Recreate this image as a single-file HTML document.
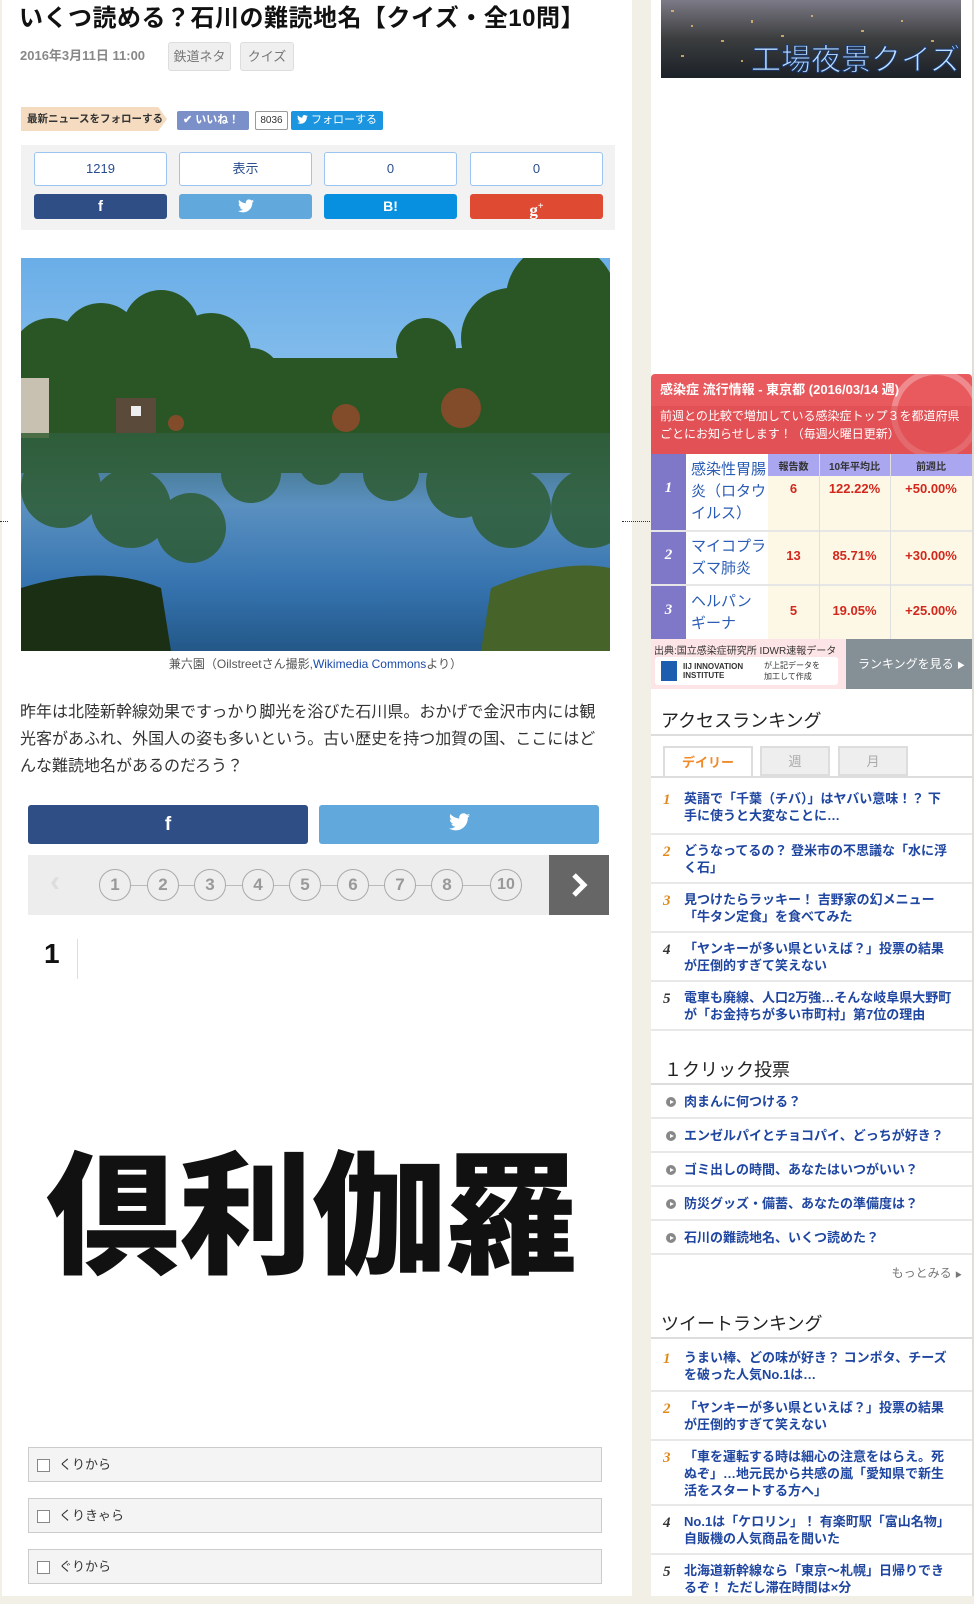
<!DOCTYPE html>
<html><head><meta charset="utf-8">
<style>
*{margin:0;padding:0;box-sizing:border-box}
body{width:974px;height:1596px;overflow:hidden;background:#f2f0e6;font-family:"Liberation Sans","Noto Sans CJK JP",sans-serif;position:relative}
.main{position:absolute;left:2px;top:0;width:630px;height:1596px;background:#fff}
.side{position:absolute;left:651px;top:0;width:321px;height:1596px;background:#fff}
.abs{position:absolute}
h1{position:absolute;left:19px;top:-2px;font-size:24px;font-weight:bold;color:#111;letter-spacing:0.5px;white-space:nowrap}
.tag{position:absolute;top:42px;height:29px;border:1px solid #ddd;background:#efefef;border-radius:3px;font-size:13px;color:#777;line-height:27px;text-align:center}
.cnt{position:absolute;top:152px;width:133px;height:34px;border:1px solid #9cc4f0;border-radius:3px;background:#fff;text-align:center;line-height:32px;font-size:13px;color:#2a4d8f}
.btn{position:absolute;top:194px;width:133px;height:25px;border-radius:3px;color:#fff;text-align:center;font-weight:bold;line-height:25px;font-size:15px}
.circ{position:absolute;top:869px;width:32px;height:32px;border:1.5px solid #aaa;border-radius:50%;background:#eee;text-align:center;line-height:29px;font-size:17px;font-weight:bold;color:#999;font-family:"Liberation Sans Narrow","Liberation Sans",sans-serif}
.opt{position:absolute;left:28px;width:574px;height:35px;border:1px solid #ccc;background:#f4f4f4;font-size:13px;color:#333;line-height:33px;padding-left:30px}
.opt:before{content:"";position:absolute;left:8px;top:11px;width:11px;height:11px;border:1px solid #888;background:#fff}
.st{position:absolute;left:10px;font-size:18px;color:#222}
.hl{position:absolute;left:0;width:321px;height:2px;background:#ddd}
.li{position:absolute;left:0;width:321px;border-bottom:2px solid #e8e8e8;font-size:13px;font-weight:bold;color:#1f46a0;line-height:17px;padding-left:33px;padding-right:22px}
.li i{position:absolute;left:12px;font-size:15px;font-weight:bold;font-family:"Liberation Serif",serif;font-style:italic;color:#e08a1c}
.li i.k{color:#333}
.vote{position:absolute;left:0;width:321px;border-bottom:2px solid #e8e8e8;height:34px;line-height:33px;font-size:13px;font-weight:bold;color:#1f46a0;padding-left:33px}
.vote:before{content:"";position:absolute;left:15px;top:12px;width:10px;height:10px;border-radius:50%;background:#888}
.vote:after{content:"";position:absolute;left:19px;top:14.5px;border-left:4px solid #fff;border-top:2.5px solid transparent;border-bottom:2.5px solid transparent}
</style></head><body>
<div class="main"></div>
<div class="abs" style="left:0;top:521px;width:8px;border-top:1px dotted #333"></div>
<div class="abs" style="left:622px;top:521px;width:30px;border-top:1px dotted #333"></div>

<h1>いくつ読める？石川の難読地名【クイズ・全10問】</h1>
<div class="abs" style="left:20px;top:45px;font-size:13px;font-weight:bold;color:#888">2016年3月11日 11:00</div>
<div class="tag" style="left:168px;width:63px">鉄道ネタ</div>
<div class="tag" style="left:240px;width:54px">クイズ</div>

<div class="abs" style="left:21px;top:107px;width:146px;height:24px;background:#f5dcc1;font-size:10.5px;font-weight:bold;line-height:24px;padding-left:6px;color:#333;clip-path:polygon(0 0,94% 0,100% 50%,94% 100%,0 100%)">最新ニュースをフォローする</div>
<div class="abs" style="left:177px;top:111px;width:72px;height:19px;background:#7b8fc8;border-radius:2px;color:#fff;font-size:11px;font-weight:bold;line-height:19px;padding-left:6px">✔ いいね！</div>
<div class="abs" style="left:255px;top:111px;width:33px;height:19px;border:1px solid #999;border-radius:2px;font-size:10px;line-height:17px;text-align:center;color:#333">8036</div>
<div class="abs" style="left:291px;top:111px;width:92px;height:19px;background:#1b95e0;border-radius:2px;color:#fff;font-size:11px;line-height:19px;padding-left:6px"><svg width="11" height="9" viewBox="0 0 24 20" style="vertical-align:-1px"><path fill="#fff" d="M24 2.4c-.9.4-1.8.7-2.8.8 1-.6 1.8-1.6 2.2-2.7-1 .6-2 1-3.1 1.2C19.3.7 18 0 16.6 0c-2.7 0-4.9 2.2-4.9 4.9 0 .4 0 .8.1 1.1C7.7 5.8 4.1 3.9 1.7.9c-.4.7-.7 1.6-.7 2.5 0 1.7.9 3.2 2.2 4.1-.8 0-1.6-.2-2.2-.6v.1c0 2.4 1.7 4.4 3.9 4.8-.4.1-.8.2-1.3.2-.3 0-.6 0-.9-.1.6 2 2.4 3.4 4.6 3.4-1.7 1.3-3.8 2.1-6.1 2.1-.4 0-.8 0-1.2-.1 2.2 1.4 4.8 2.2 7.5 2.2 9.1 0 14-7.5 14-14v-.6c1-.7 1.8-1.6 2.5-2.5z"/></svg> フォローする</div>

<div class="abs" style="left:21px;top:145px;width:594px;height:85px;background:#f2f2f2"></div>
<div class="cnt" style="left:34px">1219</div>
<div class="cnt" style="left:179px">表示</div>
<div class="cnt" style="left:324px">0</div>
<div class="cnt" style="left:470px">0</div>
<div class="btn" style="left:34px;background:#2e4e85">f</div>
<div class="btn" style="left:179px;background:#61a8dc"><svg width="16" height="14" viewBox="0 0 24 20" style="vertical-align:-2px"><path fill="#fff" d="M24 2.4c-.9.4-1.8.7-2.8.8 1-.6 1.8-1.6 2.2-2.7-1 .6-2 1-3.1 1.2C19.3.7 18 0 16.6 0c-2.7 0-4.9 2.2-4.9 4.9 0 .4 0 .8.1 1.1C7.7 5.8 4.1 3.9 1.7.9c-.4.7-.7 1.6-.7 2.5 0 1.7.9 3.2 2.2 4.1-.8 0-1.6-.2-2.2-.6v.1c0 2.4 1.7 4.4 3.9 4.8-.4.1-.8.2-1.3.2-.3 0-.6 0-.9-.1.6 2 2.4 3.4 4.6 3.4-1.7 1.3-3.8 2.1-6.1 2.1-.4 0-.8 0-1.2-.1 2.2 1.4 4.8 2.2 7.5 2.2 9.1 0 14-7.5 14-14v-.6c1-.7 1.8-1.6 2.5-2.5z"/></svg></div>
<div class="btn" style="left:324px;background:#0890e0;font-size:14px">B!</div>
<div class="btn" style="left:470px;background:#df4a32;font-family:'Liberation Serif',serif;font-size:17px">g<sup style="font-size:10px">+</sup></div>

<svg class="abs" style="left:21px;top:258px" width="589" height="393" viewBox="0 0 589 393">
<defs><linearGradient id="sky" x1="0" y1="0" x2="0" y2="1"><stop offset="0" stop-color="#6aaee8"/><stop offset="1" stop-color="#c4e0f4"/></linearGradient>
<linearGradient id="wat" x1="0" y1="0" x2="0" y2="1"><stop offset="0" stop-color="#3a6a70"/><stop offset=".35" stop-color="#5a90c0"/><stop offset=".7" stop-color="#3674b0"/><stop offset="1" stop-color="#235888"/></linearGradient></defs>
<rect width="589" height="393" fill="url(#sky)"/>
<rect y="170" width="589" height="223" fill="url(#wat)"/>
<g fill="#2a5626">
<circle cx="30" cy="100" r="40"/><circle cx="80" cy="85" r="40"/><circle cx="140" cy="70" r="38"/><circle cx="190" cy="95" r="40"/><circle cx="230" cy="120" r="30"/><circle cx="260" cy="140" r="20"/><circle cx="290" cy="150" r="15"/>
<circle cx="330" cy="150" r="22"/><circle cx="370" cy="130" r="28"/><circle cx="405" cy="90" r="30"/><circle cx="440" cy="125" r="35"/><circle cx="490" cy="80" r="50"/><circle cx="540" cy="40" r="55"/><circle cx="580" cy="110" r="60"/>
<rect x="0" y="100" width="589" height="75"/></g>
<g fill="#a04a2c" opacity=".75"><circle cx="325" cy="160" r="14"/><circle cx="440" cy="150" r="20"/><circle cx="155" cy="165" r="8"/></g>
<rect x="0" y="120" width="28" height="60" fill="#c8c0b0"/><rect x="95" y="140" width="40" height="35" fill="#5a4a3a"/><rect x="110" y="148" width="10" height="10" fill="#eee"/>
<g fill="#2c5a2c" opacity=".8">
<circle cx="40" cy="230" r="40"/><circle cx="110" cy="250" r="40"/><circle cx="170" cy="270" r="35"/><circle cx="230" cy="215" r="30"/><circle cx="300" cy="205" r="22"/><circle cx="370" cy="215" r="28"/><circle cx="440" cy="225" r="35"/><circle cx="490" cy="250" r="40"/><circle cx="570" cy="250" r="40"/>
<rect x="0" y="175" width="589" height="40"/></g>
<path d="M0 330 Q80 305 140 330 L150 393 0 393Z" fill="#1b2f14"/>
<path d="M470 330 Q540 300 589 310 L589 393 460 393Z" fill="#46632a"/>
</svg>
<div class="abs" style="left:21px;top:655px;width:589px;text-align:center;font-size:12px;color:#555">兼六園（Oilstreetさん撮影,<span style="color:#1a4ba8">Wikimedia Commons</span>より）</div>

<div class="abs" style="left:20px;top:699px;width:582px;font-size:16px;line-height:27px;color:#333">昨年は北陸新幹線効果ですっかり脚光を浴びた石川県。おかげで金沢市内には観光客があふれ、外国人の姿も多いという。古い歴史を持つ加賀の国、ここにはどんな難読地名があるのだろう？</div>

<div class="abs" style="left:28px;top:805px;width:280px;height:39px;background:#2e4e85;border-radius:3px;color:#fff;text-align:center;line-height:39px;font-weight:bold;font-size:19px">f</div>
<div class="abs" style="left:319px;top:805px;width:280px;height:39px;background:#61a8dc;border-radius:3px;text-align:center;line-height:44px"><svg width="21" height="18" viewBox="0 0 24 20"><path fill="#fff" d="M24 2.4c-.9.4-1.8.7-2.8.8 1-.6 1.8-1.6 2.2-2.7-1 .6-2 1-3.1 1.2C19.3.7 18 0 16.6 0c-2.7 0-4.9 2.2-4.9 4.9 0 .4 0 .8.1 1.1C7.7 5.8 4.1 3.9 1.7.9c-.4.7-.7 1.6-.7 2.5 0 1.7.9 3.2 2.2 4.1-.8 0-1.6-.2-2.2-.6v.1c0 2.4 1.7 4.4 3.9 4.8-.4.1-.8.2-1.3.2-.3 0-.6 0-.9-.1.6 2 2.4 3.4 4.6 3.4-1.7 1.3-3.8 2.1-6.1 2.1-.4 0-.8 0-1.2-.1 2.2 1.4 4.8 2.2 7.5 2.2 9.1 0 14-7.5 14-14v-.6c1-.7 1.8-1.6 2.5-2.5z"/></svg></div>

<div class="abs" style="left:28px;top:855px;width:575px;height:60px;background:#ededed"></div>
<div class="abs" style="left:115px;top:885px;width:400px;height:1px;background:#bbb"></div>
<div class="abs" style="left:50px;top:865px;font-size:30px;color:#ddd;font-weight:bold">‹</div>
<div class="circ" style="left:99px">1</div><div class="circ" style="left:147px">2</div><div class="circ" style="left:194px">3</div><div class="circ" style="left:242px">4</div><div class="circ" style="left:289px">5</div><div class="circ" style="left:337px">6</div><div class="circ" style="left:384px">7</div><div class="circ" style="left:431px">8</div><div class="circ" style="left:490px;font-size:16px">10</div>
<div class="abs" style="left:549px;top:855px;width:60px;height:60px;background:#666"><svg width="60" height="60"><path d="M25 20 L35 30 25 40" stroke="#fff" stroke-width="5" fill="none"/></svg></div>

<div class="abs" style="left:44px;top:938px;font-size:28px;font-weight:bold;color:#111">1</div>
<div class="abs" style="left:77px;top:939px;width:1px;height:40px;background:#ddd"></div>

<div class="abs" style="left:46px;top:1126px;font-size:133px;line-height:160px;font-weight:900;color:#111;font-family:'Noto Sans CJK JP',sans-serif;letter-spacing:0px;white-space:nowrap">倶利伽羅</div>

<div class="opt" style="top:1447px">くりから</div>
<div class="opt" style="top:1498px">くりきゃら</div>
<div class="opt" style="top:1549px">ぐりから</div>

<div class="side">
<svg class="abs" style="left:10px;top:0" width="300" height="78" viewBox="0 0 300 78">
<defs><linearGradient id="ng" x1="0" y1="0" x2="0" y2="1"><stop offset="0" stop-color="#7c7a86"/><stop offset=".5" stop-color="#3b3d3e"/><stop offset="1" stop-color="#1c2128"/></linearGradient></defs>
<rect width="300" height="78" fill="url(#ng)"/>
<g fill="#e8c070" opacity=".8"><rect x="10" y="10" width="3" height="2"/><rect x="30" y="25" width="2" height="2"/><rect x="60" y="40" width="3" height="2"/><rect x="90" y="20" width="2" height="3"/><rect x="120" y="35" width="3" height="2"/><rect x="150" y="15" width="2" height="2"/><rect x="200" y="30" width="3" height="2"/><rect x="240" y="20" width="2" height="2"/><rect x="270" y="40" width="3" height="2"/><rect x="20" y="55" width="3" height="2"/><rect x="80" y="60" width="2" height="2"/></g>
<text x="90" y="70" font-size="30" fill="#bfe0ff" stroke="#1a3a70" stroke-width="1" font-family="Noto Sans CJK JP,sans-serif">工場夜景クイズ</text>
</svg>

<div class="abs" style="left:0;top:374px;width:321px;height:80px;background:#e85a5e;border-radius:4px 4px 0 0;overflow:hidden">
 <div class="abs" style="left:240px;top:-5px;width:90px;height:90px;border:6px solid rgba(255,255,255,.3);border-radius:50%"></div>
 <div class="abs" style="left:0;top:32px;width:321px;height:48px;background:#d9474c;opacity:.5"></div>
 <div class="abs" style="left:9px;top:5px;color:#fff;font-weight:bold;font-size:13px;white-space:nowrap">感染症 流行情報 - 東京都 (2016/03/14 週)</div>
 <div class="abs" style="left:9px;top:33px;color:#fff;font-size:12px;line-height:18px;width:310px">前週との比較で増加している感染症トップ３を都道府県ごとにお知らせします！（毎週火曜日更新）</div>
</div>
<div class="abs" style="left:0;top:454px;width:35px;height:185px;background:#7f78c8"></div>
<div class="abs" style="left:35px;top:454px;width:82px;height:185px;background:#fff"></div>
<div class="abs" style="left:117px;top:454px;width:204px;height:185px;background:#fdf8e6"></div>
<div class="abs" style="left:117px;top:454px;width:204px;height:22px;background:#aaa6f0"></div>
<div class="abs" style="left:0;top:530px;width:321px;height:2px;background:#e6e6e6"></div>
<div class="abs" style="left:0;top:584px;width:321px;height:2px;background:#e6e6e6"></div>
<div class="abs" style="left:168px;top:454px;width:1px;height:185px;background:#e0e0e0"></div>
<div class="abs" style="left:239px;top:454px;width:1px;height:185px;background:#e0e0e0"></div>
<div class="abs" style="left:117px;top:458px;width:51px;text-align:center;font-size:10px;font-weight:bold;color:#333">報告数</div>
<div class="abs" style="left:168px;top:458px;width:71px;text-align:center;font-size:10px;font-weight:bold;color:#333">10年平均比</div>
<div class="abs" style="left:239px;top:458px;width:82px;text-align:center;font-size:10px;font-weight:bold;color:#333">前週比</div>
<div class="abs" style="left:0;top:480px;width:35px;text-align:center;color:#fff;font-weight:bold;font-style:italic;font-size:15px;font-family:'Liberation Serif',serif">1</div>
<div class="abs" style="left:0;top:547px;width:35px;text-align:center;color:#fff;font-weight:bold;font-style:italic;font-size:15px;font-family:'Liberation Serif',serif">2</div>
<div class="abs" style="left:0;top:602px;width:35px;text-align:center;color:#fff;font-weight:bold;font-style:italic;font-size:15px;font-family:'Liberation Serif',serif">3</div>
<div class="abs" style="left:40px;top:459px;width:76px;font-size:15px;line-height:22px;color:#2a5cb5">感染性胃腸炎（ロタウイルス）</div>
<div class="abs" style="left:40px;top:536px;width:76px;font-size:15px;line-height:22px;color:#2a5cb5">マイコプラズマ肺炎</div>
<div class="abs" style="left:40px;top:591px;width:72px;font-size:15px;line-height:22px;color:#2a5cb5">ヘルパンギーナ</div>
<div class="abs" style="left:117px;top:481px;width:51px;text-align:center;color:#d2281c;font-weight:bold;font-size:13px">6</div>
<div class="abs" style="left:168px;top:481px;width:71px;text-align:center;color:#d2281c;font-weight:bold;font-size:13px">122.22%</div>
<div class="abs" style="left:239px;top:481px;width:82px;text-align:center;color:#d2281c;font-weight:bold;font-size:13px">+50.00%</div>
<div class="abs" style="left:117px;top:548px;width:51px;text-align:center;color:#d2281c;font-weight:bold;font-size:13px">13</div>
<div class="abs" style="left:168px;top:548px;width:71px;text-align:center;color:#d2281c;font-weight:bold;font-size:13px">85.71%</div>
<div class="abs" style="left:239px;top:548px;width:82px;text-align:center;color:#d2281c;font-weight:bold;font-size:13px">+30.00%</div>
<div class="abs" style="left:117px;top:603px;width:51px;text-align:center;color:#d2281c;font-weight:bold;font-size:13px">5</div>
<div class="abs" style="left:168px;top:603px;width:71px;text-align:center;color:#d2281c;font-weight:bold;font-size:13px">19.05%</div>
<div class="abs" style="left:239px;top:603px;width:82px;text-align:center;color:#d2281c;font-weight:bold;font-size:13px">+25.00%</div>
<div class="abs" style="left:0;top:639px;width:195px;height:50px;background:#fde4e6"></div>
<div class="abs" style="left:3px;top:642px;font-size:10px;color:#333;white-space:nowrap">出典:国立感染症研究所 IDWR速報データ</div>
<div class="abs" style="left:4px;top:657px;width:183px;height:28px;background:#fff;border-radius:3px"></div>
<div class="abs" style="left:10px;top:661px;width:16px;height:20px;background:#1d5db0"></div>
<div class="abs" style="left:32px;top:662px;font-size:8px;line-height:9px;color:#333;font-weight:bold">IIJ INNOVATION<br>INSTITUTE</div>
<div class="abs" style="left:113px;top:660px;font-size:8px;line-height:11px;color:#333">が上記データを<br>加工して作成</div>
<div class="abs" style="left:195px;top:639px;width:126px;height:50px;background:#858f96;color:#fff;font-size:12px;line-height:50px;padding-left:12px">ランキングを見る <span style="font-size:8px">▶</span></div>

<div class="st" style="top:707px">アクセスランキング</div>
<div class="hl" style="top:734px"></div>
<div class="abs" style="left:12px;top:746px;width:90px;height:32px;border:2px solid #ddd;border-bottom:none;background:#fff;text-align:center;line-height:30px;color:#f08a2a;font-size:13px;font-weight:bold">デイリー</div>
<div class="abs" style="left:109px;top:746px;width:70px;height:30px;border:2px solid #ddd;background:#eee;text-align:center;line-height:28px;color:#aaa;font-size:13px">週</div>
<div class="abs" style="left:187px;top:746px;width:70px;height:30px;border:2px solid #ddd;background:#eee;text-align:center;line-height:28px;color:#aaa;font-size:13px">月</div>
<div class="hl" style="top:776px"></div>
<div class="li" style="top:776px;height:59px;padding-top:14px"><i style="top:16px">1</i>英語で「千葉（チバ）」はヤバい意味！？ 下手に使うと大変なことに…</div>
<div class="li" style="top:835px;height:49px;padding-top:7px"><i style="top:9px">2</i>どうなってるの？ 登米市の不思議な「水に浮く石」</div>
<div class="li" style="top:884px;height:49px;padding-top:7px"><i style="top:9px">3</i>見つけたらラッキー！ 吉野家の幻メニュー「牛タン定食」を食べてみた</div>
<div class="li" style="top:933px;height:49px;padding-top:7px"><i class="k" style="top:9px">4</i>「ヤンキーが多い県といえば？」投票の結果が圧倒的すぎて笑えない</div>
<div class="li" style="top:982px;height:49px;padding-top:7px;padding-right:12px"><i class="k" style="top:9px">5</i>電車も廃線、人口2万強…そんな岐阜県大野町が「お金持ちが多い市町村」第7位の理由</div>

<div class="st" style="top:1056px;left:13px">１クリック投票</div>
<div class="hl" style="top:1083px"></div>
<div class="vote" style="top:1085px">肉まんに何つける？</div>
<div class="vote" style="top:1119px">エンゼルパイとチョコパイ、どっちが好き？</div>
<div class="vote" style="top:1153px">ゴミ出しの時間、あなたはいつがいい？</div>
<div class="vote" style="top:1187px">防災グッズ・備蓄、あなたの準備度は？</div>
<div class="vote" style="top:1221px">石川の難読地名、いくつ読めた？</div>
<div class="abs" style="right:10px;top:1264px;font-size:12px;color:#777">もっとみる <span style="font-size:7px">▶</span></div>

<div class="st" style="top:1310px">ツイートランキング</div>
<div class="hl" style="top:1337px"></div>
<div class="li" style="top:1339px;height:53px;padding-top:10px"><i style="top:12px">1</i>うまい棒、どの味が好き？ コンポタ、チーズを破った人気No.1は…</div>
<div class="li" style="top:1392px;height:49px;padding-top:7px"><i style="top:9px">2</i>「ヤンキーが多い県といえば？」投票の結果が圧倒的すぎて笑えない</div>
<div class="li" style="top:1441px;height:65px;padding-top:7px"><i style="top:9px">3</i>「車を運転する時は細心の注意をはらえ。死ぬぞ」…地元民から共感の嵐「愛知県で新生活をスタートする方へ」</div>
<div class="li" style="top:1506px;height:49px;padding-top:7px;padding-right:12px"><i class="k" style="top:9px">4</i>No.1は「ケロリン」！ 有楽町駅「富山名物」自販機の人気商品を聞いた</div>
<div class="li" style="top:1555px;height:49px;padding-top:7px;border:none"><i class="k" style="top:9px">5</i>北海道新幹線なら「東京〜札幌」日帰りできるぞ！ ただし滞在時間は×分</div>
</div>
<div class="abs" style="left:972px;top:0;width:2px;height:1596px;background:#e0ded6"></div>
</body></html>
